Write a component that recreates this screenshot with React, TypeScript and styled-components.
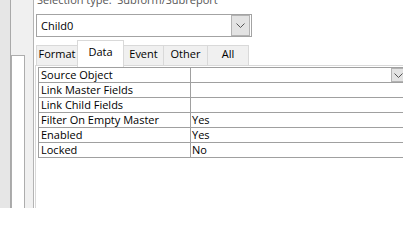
import React from "react";
import styled, { createGlobalStyle } from "styled-components";

const GlobalStyle = createGlobalStyle`
  html, body { margin: 0; padding: 0; background: #ffffff; }
  body {
    width: 403px; height: 208px; overflow: hidden;
    font-family: "Open Sans", "Noto Sans", "DejaVu Sans", sans-serif;
    color: #000;
  }
`;

const Frame = styled.div`
  display: flex;
  width: 403px;
  height: 208px;
  overflow: hidden;
  background: #fff;
`;

const NavStrip = styled.div`
  flex: 0 0 10px;
  background: #e6e6e6;
  border-right: 1px solid #a9a9a9;
`;

const SplitterArea = styled.div`
  flex: 0 0 22px;
  background: #f0f0f0;
  border-right: 1px solid #b4b4b4;
  display: flex;
  flex-direction: column;
  padding-top: 55px;
`;

const ScrollTrack = styled.div`
  width: 12px;
  flex: 1;
  background: #ffffff;
  border: 1px solid #adadad;
  border-bottom: none;
`;

const Main = styled.div`
  flex: 0 0 auto;
  width: 369px;
  display: flex;
  flex-direction: column;
  padding-left: 1px;
`;

const SelectionLabel = styled.div`
  margin-top: -7px;
  margin-left: 2px;
  height: 14px;
  line-height: 14px;
  font-size: 11px;
  color: #555;
  white-space: nowrap;
`;

const Combo = styled.div`
  margin-top: 7px;
  margin-left: 1px;
  width: 214px;
  height: 21px;
  border: 1px solid #a3a3a3;
  display: flex;
  align-items: stretch;
  background: #fff;
`;

const ComboText = styled.div`
  flex: 1;
  padding-left: 4px;
  font-size: 11px;
  line-height: 21px;
`;

const DropButton = styled.div<{ $w: number }>`
  width: ${(p) => p.$w}px;
  box-sizing: border-box;
  background: #e3e3e3;
  border: 1px solid #b3b3b3;
  display: flex;
  align-items: center;
  justify-content: center;
`;

const ComboButton = styled(DropButton)`
  margin-right: 1px;
`;

const TabStrip = styled.div`
  margin-top: 3px;
  margin-left: 1px;
  display: flex;
  align-items: flex-end;
  height: 26px;
  position: relative;
  z-index: 1;
  margin-bottom: -1px;
`;

const Tab = styled.div<{ $w: number; $active?: boolean }>`
  box-sizing: border-box;
  width: ${(p) => p.$w}px;
  height: ${(p) => (p.$active ? 27 : 21)}px;
  margin-left: -1px;
  &:first-child { margin-left: 0; }
  border: 1px solid #d9d9d9;
  border-bottom: ${(p) => (p.$active ? "none" : "1px solid #d9d9d9")};
  background: ${(p) => (p.$active ? "#ffffff" : "#f0f0f0")};
  font-size: 11px;
  text-align: center;
  line-height: ${(p) => (p.$active ? 22 : 16)}px;
  margin-bottom: ${(p) => (p.$active ? -1 : 0)}px;
  position: relative;
  z-index: ${(p) => (p.$active ? 2 : 1)};
`;

const Panel = styled.div`
  flex: 1;
  border-top: 1px solid #d9d9d9;
  border-left: 1px solid #d9d9d9;
  padding: 1px 0 0 2px;
`;

const Grid = styled.div`
  width: 366px;
  border: 1px solid #a0a0a0;
  border-bottom: none;
`;

const Row = styled.div`
  display: flex;
  height: 14px;
  border-bottom: 1px solid #a0a0a0;
`;

const LabelCell = styled.div`
  flex: 0 0 149px;
  border-right: 1px solid #a0a0a0;
  padding-left: 2px;
  font-size: 11px;
  line-height: 14px;
  white-space: nowrap;
  overflow: hidden;
`;

const ValueCell = styled.div`
  flex: 1;
  display: flex;
  justify-content: space-between;
  padding-left: 1px;
  font-size: 11px;
  line-height: 14px;
  white-space: nowrap;
`;

const Chevron = () => (
  <svg width="9" height="5" viewBox="0 0 9 5">
    <polyline points="0.5,0.5 4.5,4.5 8.5,0.5" fill="none" stroke="#555" strokeWidth="1" />
  </svg>
);

const rows: { label: string; value: string; dropdown?: boolean }[] = [
  { label: "Source Object", value: "", dropdown: true },
  { label: "Link Master Fields", value: "" },
  { label: "Link Child Fields", value: "" },
  { label: "Filter On Empty Master", value: "Yes" },
  { label: "Enabled", value: "Yes" },
  { label: "Locked", value: "No" },
];

const tabs = [
  { name: "Format", w: 42 },
  { name: "Data", w: 47, active: true },
  { name: "Event", w: 41 },
  { name: "Other", w: 45 },
  { name: "All", w: 42 },
];

export default function App() {
  return (
    <>
      <GlobalStyle />
      <Frame>
        <NavStrip />
        <SplitterArea>
          <ScrollTrack />
        </SplitterArea>
        <Main>
          <SelectionLabel>Selection type:&nbsp; Subform/Subreport</SelectionLabel>
          <Combo>
            <ComboText>Child0</ComboText>
            <ComboButton $w={19}>
              <Chevron />
            </ComboButton>
          </Combo>
          <TabStrip>
            {tabs.map((t) => (
              <Tab key={t.name} $w={t.w} $active={t.active}>
                {t.name}
              </Tab>
            ))}
          </TabStrip>
          <Panel>
            <Grid>
              {rows.map((r) => (
                <Row key={r.label}>
                  <LabelCell>{r.label}</LabelCell>
                  <ValueCell>
                    <span>{r.value}</span>
                    {r.dropdown && (
                      <DropButton $w={14}>
                        <Chevron />
                      </DropButton>
                    )}
                  </ValueCell>
                </Row>
              ))}
            </Grid>
          </Panel>
        </Main>
      </Frame>
    </>
  );
}
